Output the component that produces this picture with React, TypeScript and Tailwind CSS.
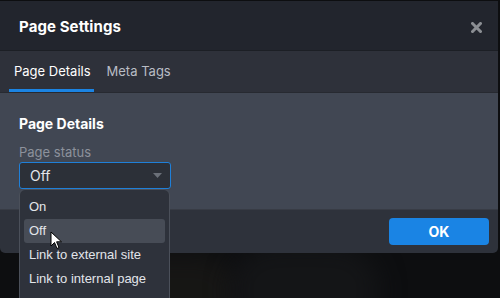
import React from "react";

export default function App() {
  const items = ["On", "Off", "Link to external site", "Link to internal page"];
  return (
    <div
      className="relative w-[500px] h-[298px] overflow-hidden bg-[#0d0e10]"
      style={{ fontFamily: "Inter, 'Liberation Sans', sans-serif" }}
    >
      {/* background photo hint */}
      <div className="absolute left-[60px] top-[255px] w-[180px] h-[80px] rounded-full bg-[#191816] blur-md opacity-80" />
      <div className="absolute left-[230px] top-[245px] w-[150px] h-[90px] rounded-full bg-[#141517] blur-md" />

      <div className="relative w-[498px] mt-[1px] rounded-b-[5px] overflow-hidden">
        {/* header */}
        <div className="h-[50px] bg-[#22252d] flex items-center justify-between pl-[19px] pr-[16px] pt-[3px] border-b border-[#1c1f25]">
          <div className="text-[15px] font-bold text-white tracking-[0.1px]">Page Settings</div>
          <svg width="11" height="11" viewBox="0 0 11 11">
            <path d="M1.5 1.5 L9.5 9.5 M9.5 1.5 L1.5 9.5" stroke="#8b8e93" strokeWidth="3" strokeLinecap="square" />
          </svg>
        </div>
        {/* tabs */}
        <div className="h-[42px] bg-[#2e313a] flex items-end pl-[9px] border-b border-[#272a31]">
          <div className="flex flex-col">
            <div className="px-[5px] pb-[8px] text-[13px] text-white">Page Details</div>
            <div className="h-[3px] bg-[#1b84e3] w-[85px]" />
          </div>
          <div className="ml-[6px] px-[5px] pb-[11px] text-[13px] text-[#b9bdc5]">Meta Tags</div>
        </div>
        {/* body */}
        <div className="h-[116px] bg-[#414753] pl-[19px] pt-[22px]">
          <div className="text-[14px] font-bold text-white leading-[18px]">Page Details</div>
          <div className="mt-[12px] text-[13px] text-[#8d929c] leading-[15px]">Page status</div>
          <div className="mt-[2px] w-[152px] h-[27px] rounded-[3px] border border-[#1f80d9] bg-[#2c3038] flex items-center justify-between pl-[10px] pr-[8px]">
            <span className="text-[14px] text-[#e4e6ea]">Off</span>
            <svg width="9" height="5" viewBox="0 0 9 5"><path d="M0 0 L9 0 L4.5 5 Z" fill="#6b7079" /></svg>
          </div>
        </div>
        {/* footer */}
        <div className="h-[44px] bg-[#2e323b] flex items-center justify-end pr-[9px] border-t border-[#383c45]">
          <div className="w-[100px] h-[27px] rounded-[4px] bg-[#1a84e4] flex items-center justify-center text-[14px] font-bold text-white">
            OK
          </div>
        </div>
      </div>

      {/* dropdown */}
      <div
        className="absolute left-[19px] top-[189px] w-[151px] h-[120px] rounded-[6px] border border-[#4b505a] bg-[#2e323b] px-[4px] pt-[5px]"
        style={{ fontFamily: "'Liberation Sans', Arial, sans-serif" }}
      >
        {items.map((t, i) => (
          <div
            key={t}
            className={`h-[24px] rounded-[3px] flex items-center pl-[5px] text-[13px] text-[#e2e5ea] ${i === 1 ? "bg-[#474c56]" : ""}`}
          >
            {t}
          </div>
        ))}
      </div>

      {/* cursor */}
      <svg className="absolute left-[50px] top-[231px]" width="13" height="19" viewBox="0 0 13 19">
        <path d="M1 1 L1 15 L4.5 11.5 L7 17.5 L9 16.5 L6.6 10.8 L11.5 10.8 Z" fill="#fff" stroke="#000" strokeWidth="1" strokeLinejoin="round" />
      </svg>
    </div>
  );
}
